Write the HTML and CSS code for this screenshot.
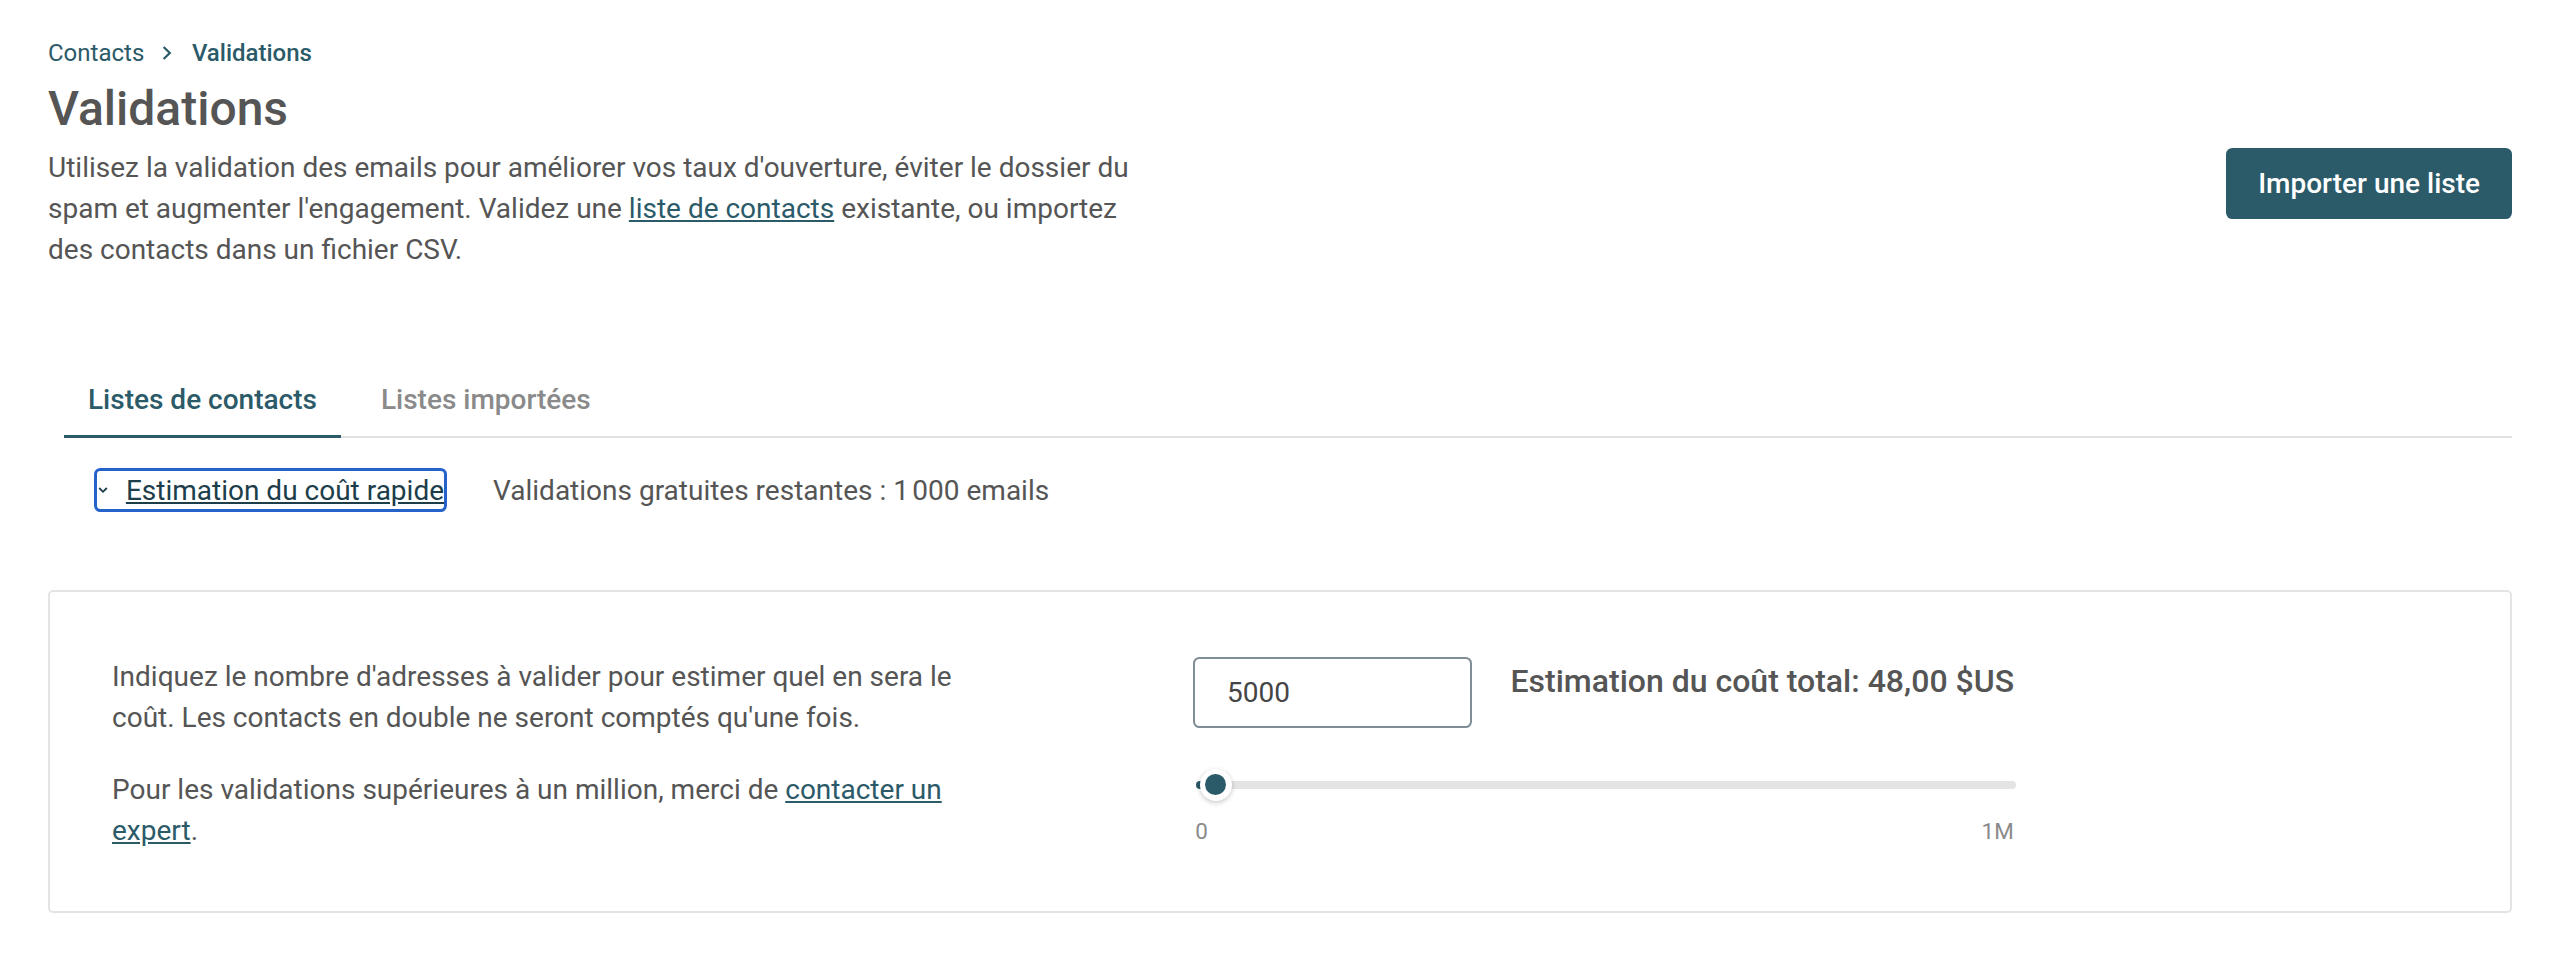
FILE: index.html
```html
<!DOCTYPE html>
<html lang="fr">
<head>
<meta charset="utf-8">
<title>Validations</title>
<link rel="stylesheet" href="styles.css">
</head>
<body>
<div class="page">
  <header class="header">
    <div class="header-main">
      <nav class="breadcrumb">
        <a class="crumb" href="#">Contacts</a>
        <svg class="crumb-sep" width="13" height="16" viewBox="0 0 13 16"><path d="M2.6 2 L8.8 8 L2.6 14" fill="none" stroke="#2b5a69" stroke-width="2.2"/></svg>
        <span class="crumb current">Validations</span>
      </nav>
      <h1 class="title">Validations</h1>
      <p class="intro">Utilisez la validation des emails pour améliorer vos taux d'ouverture, éviter le dossier du spam et augmenter l'engagement. Validez une <a href="#" class="link">liste de contacts</a> existante, ou importez des contacts dans un fichier CSV.</p>
    </div>
    <button class="btn-primary">Importer une liste</button>
  </header>

  <div class="tabs">
    <div class="tab active">Listes de contacts</div>
    <div class="tab">Listes importées</div>
  </div>

  <div class="estimate-row">
    <button class="toggle"><svg class="toggle-icon" width="10" height="10" viewBox="0 0 10 10"><path d="M1.2 3 L5 6.8 L8.8 3" fill="none" stroke="#1c3d4a" stroke-width="1.8"/></svg><span class="toggle-text">Estimation du coût rapide</span></button>
    <span class="free">Validations gratuites restantes : 1&#8239;000 emails</span>
  </div>

  <section class="card">
    <div class="card-left">
      <p class="card-text">Indiquez le nombre d'adresses à valider pour estimer quel en sera le coût. Les contacts en double ne seront comptés qu'une fois.</p>
      <p class="card-text">Pour les validations supérieures à un million, merci de <a href="#" class="link">contacter un expert</a>.</p>
    </div>
    <div class="card-right">
      <div class="cost-row">
        <input class="count-input" type="text" value="5000">
        <div class="cost">Estimation du coût total: 48,00 $US</div>
      </div>
      <div class="slider">
        <div class="track"></div>
        <div class="fill"></div>
        <div class="thumb"><div class="thumb-dot"></div></div>
      </div>
      <div class="slider-labels">
        <span>0</span>
        <span>1M</span>
      </div>
    </div>
  </section>
</div>
</body>
</html>
```
FILE: styles.css
```css
html, body {
  margin: 0;
  padding: 0;
  background: #ffffff;
}
body {
  font-family: Roboto, "Liberation Sans", Arial, sans-serif;
  color: #555555;
}
.page {
  padding: 33.6px 52px 64px 48px;
}
.header {
  display: flex;
  justify-content: space-between;
  align-items: flex-start;
}
.header-main {
  display: flex;
  flex-direction: column;
}
.breadcrumb {
  display: flex;
  align-items: center;
  font-size: 24px;
  line-height: 38.4px;
  color: #2b5a69;
}
.crumb {
  color: #2b5a69;
  text-decoration: none;
}
.crumb.current {
  font-weight: 500;
}
.crumb-sep {
  margin: 0 17.6px 0 17px;
}
.title {
  margin: 8px 0 0;
  font-size: 48px;
  line-height: 57.6px;
  font-weight: 500;
  color: #555555;
}
.intro {
  margin: 9.6px 0 0;
  max-width: 1088px;
  font-size: 28px;
  line-height: 41px;
  color: #555555;
}
.link {
  color: #2b5a69;
  text-decoration: underline;
}
.btn-primary {
  margin-top: 114.4px;
  height: 71px;
  padding: 0 32px;
  border: none;
  border-radius: 6.4px;
  background: #2b5a69;
  color: #ffffff;
  font-family: Roboto, "Liberation Sans", Arial, sans-serif;
  font-size: 28px;
  font-weight: 500;
}
.tabs {
  display: flex;
  gap: 16px;
  margin: 91.2px 0 0 16px;
  border-bottom: 2px solid #e2e2e2;
}
.tab {
  padding: 19.2px 24px 16px;
  font-size: 28px;
  line-height: 38.4px;
  font-weight: 500;
  color: #8a8a8a;
  border-bottom: 3px solid transparent;
  margin-bottom: -2px;
}
.tab.active {
  color: #2b5a69;
  border-bottom-color: #2b5a69;
}
.estimate-row {
  display: flex;
  align-items: center;
  gap: 46px;
  margin: 30.4px 0 0 46.3px;
}
.toggle {
  display: inline-flex;
  align-items: center;
  height: 43.4px;
  padding: 0 0 0 1px;
  border: 3px solid #2562c9;
  border-radius: 6.4px;
  background: #ffffff;
  font-family: Roboto, "Liberation Sans", Arial, sans-serif;
  font-size: 28px;
  line-height: 37px;
  color: #1c3d4a;
}
.toggle-icon {
  margin-right: 17.6px;
}
.toggle-text {
  text-decoration: underline;
}
.free {
  font-size: 28px;
  line-height: 37px;
  color: #555555;
}
.card {
  display: flex;
  margin-top: 78.3px;
  padding: 65px 60px 60px 62px;
  border: 2px solid #e4e4e4;
  border-radius: 5px;
}
.card-left {
  flex: 0 0 1081px;
}
.card-text {
  margin: 0 0 32px;
  max-width: 864px;
  font-size: 28px;
  line-height: 40.5px;
  color: #555555;
}
.card-text:last-child {
  margin-bottom: 0;
}
.card-right {
  display: flex;
  flex-direction: column;
}
.cost-row {
  display: flex;
  align-items: flex-start;
  gap: 39px;
}
.count-input {
  box-sizing: border-box;
  width: 278.5px;
  height: 71px;
  padding: 0 32px;
  border: 2px solid #7f8d97;
  border-radius: 6.4px;
  font-family: Roboto, "Liberation Sans", Arial, sans-serif;
  font-size: 28px;
  color: #454545;
  outline: none;
}
.cost {
  margin-top: 1.5px;
  font-size: 32px;
  line-height: 45px;
  font-weight: 500;
  color: #555555;
}
.slider {
  position: relative;
  width: 820px;
  height: 35.2px;
  margin: 39px 0 0 3.2px;
}
.track {
  position: absolute;
  left: 0;
  right: 0;
  top: 13.6px;
  height: 8px;
  border-radius: 4px;
  background: #e4e4e4;
}
.fill {
  position: absolute;
  left: 0;
  width: 20px;
  top: 13.6px;
  height: 8px;
  border-radius: 4px 0 0 4px;
  background: #2b5a69;
}
.thumb {
  position: absolute;
  left: 3.5px;
  top: 1.6px;
  width: 32px;
  height: 32px;
  border-radius: 50%;
  background: #ffffff;
  box-shadow: 0 1.6px 5px rgba(0, 0, 0, 0.22);
  display: flex;
  align-items: center;
  justify-content: center;
}
.thumb-dot {
  width: 21px;
  height: 21px;
  border-radius: 50%;
  background: #2b5a69;
}
.slider-labels {
  display: flex;
  justify-content: space-between;
  width: 818.5px;
  margin: 12.7px 0 0 2.2px;
  font-size: 22.4px;
  line-height: 32px;
  color: #8a8a8a;
}
```
